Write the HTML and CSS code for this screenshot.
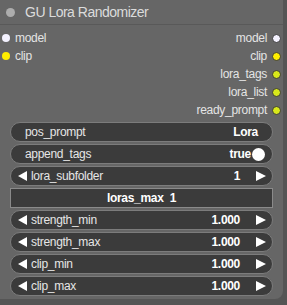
FILE: index.html
```html
<!DOCTYPE html>
<html lang="en">
<head>
  <meta charset="UTF-8">
  <title>GU Lora Randomizer</title>
  <link rel="stylesheet" href="styles.css">
</head>
<body>
  <div class="node">
    <div class="title">
      <span class="titleDot"></span>
      <span class="titleText">GU Lora Randomizer</span>
    </div>

    <div class="slots">
      <div class="inputs">
        <div class="slot"><span class="dot white"></span>model</div>
        <div class="slot"><span class="dot yellow"></span>clip</div>
      </div>
      <div class="outputs">
        <div class="slot">model<span class="dot white ring"></span></div>
        <div class="slot">clip<span class="dot yellow ring"></span></div>
        <div class="slot">lora_tags<span class="dot lime ring"></span></div>
        <div class="slot">lora_list<span class="dot lime ring"></span></div>
        <div class="slot">ready_prompt<span class="dot lime ring"></span></div>
      </div>
    </div>

    <div class="widgets">
      <div class="widget">
        <span class="label">pos_prompt</span>
        <span class="value">Lora</span>
      </div>
      <div class="widget">
        <span class="label">append_tags</span>
        <span class="value">true</span>
        <span class="knob"></span>
      </div>
      <div class="widget num">
        <span class="arrow left"></span>
        <span class="label">lora_subfolder</span>
        <span class="value">1</span>
        <span class="arrow right"></span>
      </div>
      <div class="box">loras_max&nbsp; 1</div>
      <div class="widget num">
        <span class="arrow left"></span>
        <span class="label">strength_min</span>
        <span class="value">1.000</span>
        <span class="arrow right"></span>
      </div>
      <div class="widget num">
        <span class="arrow left"></span>
        <span class="label">strength_max</span>
        <span class="value">1.000</span>
        <span class="arrow right"></span>
      </div>
      <div class="widget num">
        <span class="arrow left"></span>
        <span class="label">clip_min</span>
        <span class="value">1.000</span>
        <span class="arrow right"></span>
      </div>
      <div class="widget num">
        <span class="arrow left"></span>
        <span class="label">clip_max</span>
        <span class="value">1.000</span>
        <span class="arrow right"></span>
      </div>
    </div>
  </div>
</body>
</html>
```

FILE: styles.css
```css
* {
  margin: 0;
  padding: 0;
  box-sizing: border-box;
  font-family: "Liberation Sans", Arial, sans-serif;
}

body {
  background-color: #555;
  width: 287px;
  height: 305px;
}

.node {
  width: 283px;
  height: 299px;
  background-color: #666;
  border-radius: 0 0 8px 0;
}

.title {
  height: 25px;
  display: flex;
  align-items: center;
  gap: 10px;
  padding-left: 6px;
  border-bottom: 1px solid #595959;
}
.titleDot {
  width: 9px;
  height: 9px;
  border-radius: 50%;
  background-color: #adadad;
}
.titleText {
  color: #dcdcdc;
  font-size: 14px;
  letter-spacing: -0.5px;
}

.slots {
  display: flex;
  justify-content: space-between;
  padding: 4px 2px 0 2px;
}
.slot {
  height: 18px;
  display: flex;
  align-items: center;
  gap: 5px;
  color: #e4e4e4;
  font-size: 12px;
  letter-spacing: -0.3px;
}
.outputs .slot {
  justify-content: flex-end;
}
.dot {
  width: 8px;
  height: 8px;
  border-radius: 50%;
}
.dot.ring {
  border: 1.5px solid #3a3a3a;
  width: 9px;
  height: 9px;
}
.white {
  background-color: #f4f2ff;
}
.yellow {
  background-color: #ffee00;
}
.lime {
  background-color: #d8e81a;
}

.widgets {
  display: flex;
  flex-direction: column;
  gap: 2px;
  padding: 3px 10px 0 10px;
}
.widget {
  height: 20px;
  display: flex;
  align-items: center;
  padding: 0 14px;
  background-color: #3b3b3b;
  border: 1px solid #7c7c7c;
  border-radius: 10px;
  font-size: 12px;
  letter-spacing: -0.3px;
}
.widget.num {
  padding: 0 6px 0 7px;
}
.label {
  color: #e6e6e6;
  flex: 1;
}
.value {
  color: #fff;
  font-weight: bold;
}
.knob {
  width: 13px;
  height: 13px;
  border-radius: 50%;
  background-color: #fff;
  margin: 0 -7px 0 1px;
}
.arrow {
  width: 0;
  height: 0;
  border-top: 5px solid transparent;
  border-bottom: 5px solid transparent;
}
.arrow.left {
  border-right: 9px solid #fff;
  margin-right: 4px;
}
.arrow.right {
  border-left: 10px solid #fff;
  margin-left: 16px;
}

.box {
  height: 20px;
  display: flex;
  align-items: center;
  justify-content: center;
  background-color: #3b3b3b;
  border: 1px solid #8a8a8a;
  color: #fff;
  font-size: 12px;
  font-weight: bold;
  letter-spacing: -0.3px;
}
```
